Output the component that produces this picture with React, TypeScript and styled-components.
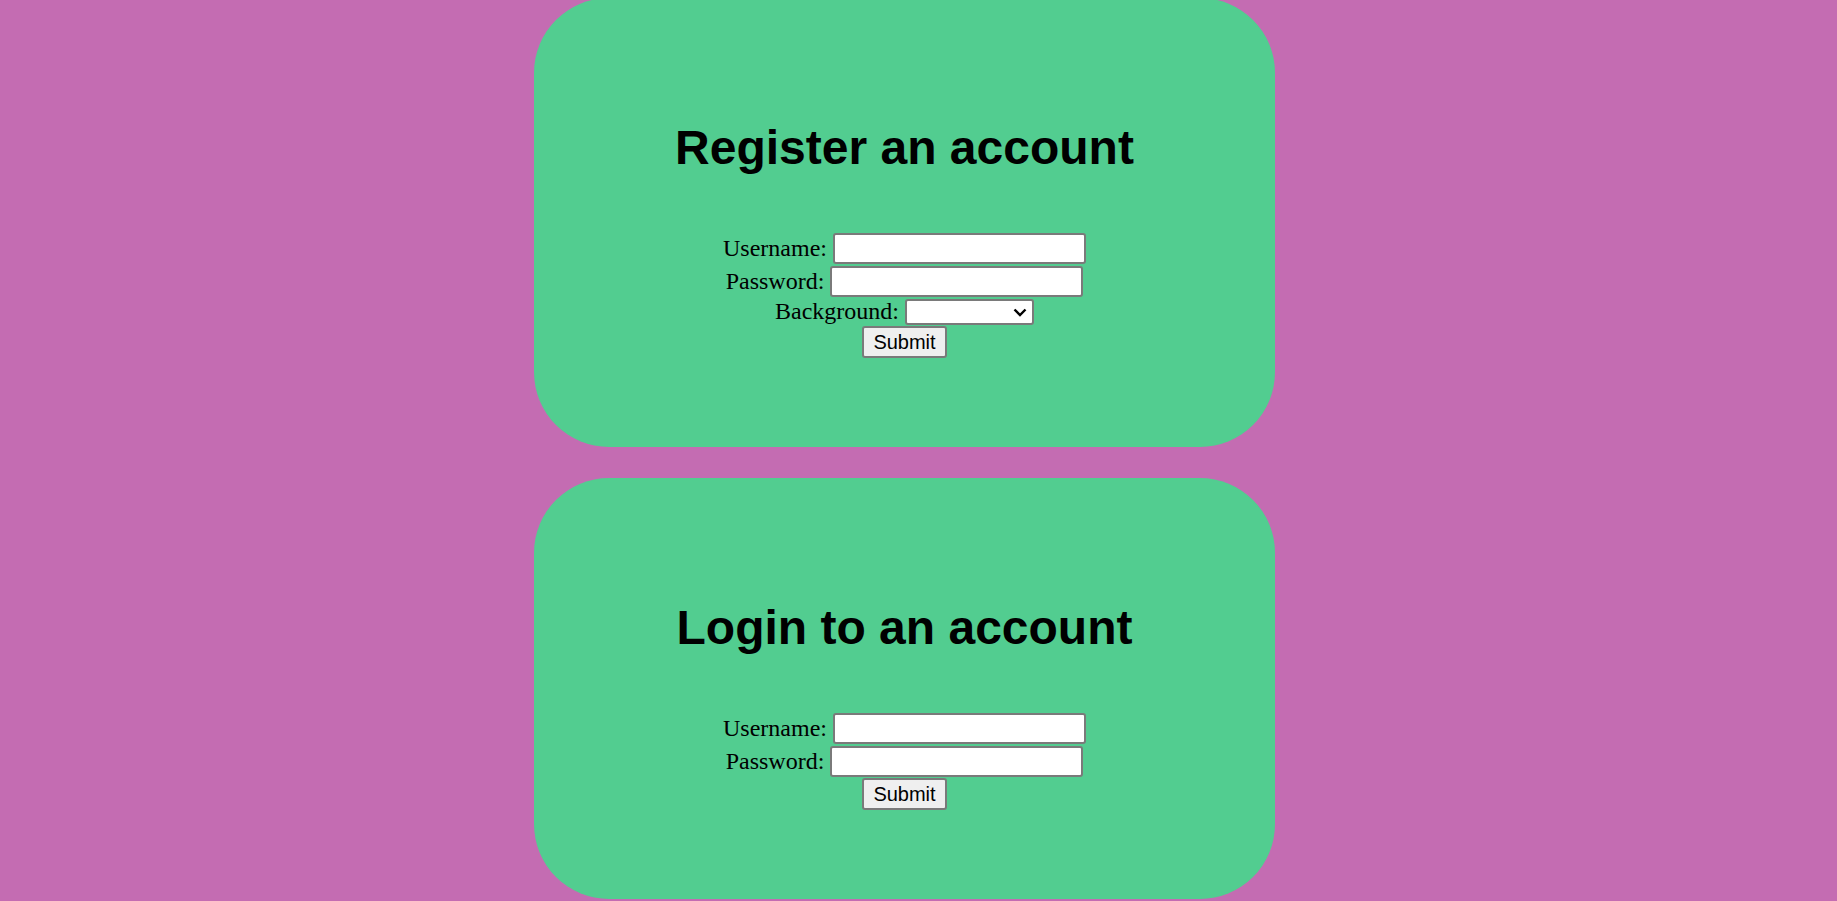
import React from "react";
import styled, { createGlobalStyle } from "styled-components";

const GlobalStyle = createGlobalStyle`
  html, body {
    margin: 0;
    padding: 0;
    background-color: #c46cb2;
  }
  body {
    font-family: "Liberation Serif", "Times New Roman", serif;
  }
`;

const Page = styled.main`
  display: flex;
  flex-direction: column;
  align-items: center;
  gap: 31px;
  margin-top: -2px;
  padding-right: 28px;
`;

const Card = styled.section`
  box-sizing: border-box;
  width: 741px;
  padding: 122px 0 89px 0;
  background-color: #52cd90;
  border-radius: 75px;
  text-align: center;
`;

const Title = styled.h1`
  margin: 0;
  font-family: "Liberation Sans", Arial, sans-serif;
  font-size: 48px;
  font-weight: bold;
  line-height: 55px;
  color: #000;
`;

const Form = styled.form`
  display: flex;
  flex-direction: column;
  align-items: center;
  margin-top: 57px;
`;

const Row = styled.div<{ $height?: number }>`
  display: flex;
  align-items: center;
  justify-content: center;
  gap: 6px;
  height: ${(p) => (p.$height ? `${p.$height}px` : "auto")};
`;

const Label = styled.label`
  font-family: "Liberation Serif", "Times New Roman", serif;
  font-size: 24px;
  line-height: 27.6px;
  color: #000;
`;

const Input = styled.input`
  box-sizing: border-box;
  width: 253px;
  height: 31px;
  padding: 1px 3px;
  font-family: "Liberation Sans", Arial, sans-serif;
  font-size: 20px;
  background: #fff;
  border: 2px solid #7a7a7a;
  border-radius: 3px;
`;

const SelectWrap = styled.div`
  position: relative;
  display: flex;
`;

const Select = styled.select`
  box-sizing: border-box;
  width: 129px;
  height: 26px;
  padding: 0 24px 0 3px;
  font-family: "Liberation Sans", Arial, sans-serif;
  font-size: 20px;
  background: #fff;
  border: 2px solid #7a7a7a;
  border-radius: 3px;
  color: #000;
  appearance: none;
  -webkit-appearance: none;
`;

const Chevron = styled.svg`
  position: absolute;
  right: 7px;
  top: 9px;
  width: 14px;
  height: 9px;
  pointer-events: none;
`;

const SubmitButton = styled.button`
  box-sizing: border-box;
  width: 85px;
  height: 32px;
  padding: 0 9px;
  font-family: "Liberation Sans", Arial, sans-serif;
  font-size: 20px;
  color: #000;
  background: #efefef;
  border: 2px solid #7a7a7a;
  border-radius: 3px;
`;

const BackgroundSelect = ({ id }: { id: string }) => (
  <SelectWrap>
    <Select id={id} defaultValue="">
      <option value=""></option>
      <option value="pink">Pink</option>
      <option value="green">Green</option>
    </Select>
    <Chevron viewBox="0 0 14 9">
      <path d="M1.5 1.5 L7 7 L12.5 1.5" fill="none" stroke="#000" strokeWidth="2.4" />
    </Chevron>
  </SelectWrap>
);

const RegisterCard = () => (
  <Card>
    <Title>Register an account</Title>
    <Form onSubmit={(e) => e.preventDefault()}>
      <Row $height={33}>
        <Label htmlFor="reg-user">Username:</Label>
        <Input id="reg-user" type="text" />
      </Row>
      <Row $height={33}>
        <Label htmlFor="reg-pass">Password:</Label>
        <Input id="reg-pass" type="password" />
      </Row>
      <Row $height={28}>
        <Label htmlFor="reg-bg">Background:</Label>
        <BackgroundSelect id="reg-bg" />
      </Row>
      <Row $height={32}>
        <SubmitButton type="submit">Submit</SubmitButton>
      </Row>
    </Form>
  </Card>
);

const LoginCard = () => (
  <Card>
    <Title>Login to an account</Title>
    <Form onSubmit={(e) => e.preventDefault()}>
      <Row $height={33}>
        <Label htmlFor="log-user">Username:</Label>
        <Input id="log-user" type="text" />
      </Row>
      <Row $height={33}>
        <Label htmlFor="log-pass">Password:</Label>
        <Input id="log-pass" type="password" />
      </Row>
      <Row $height={32}>
        <SubmitButton type="submit">Submit</SubmitButton>
      </Row>
    </Form>
  </Card>
);

export default function App() {
  return (
    <>
      <GlobalStyle />
      <Page>
        <RegisterCard />
        <LoginCard />
      </Page>
    </>
  );
}
